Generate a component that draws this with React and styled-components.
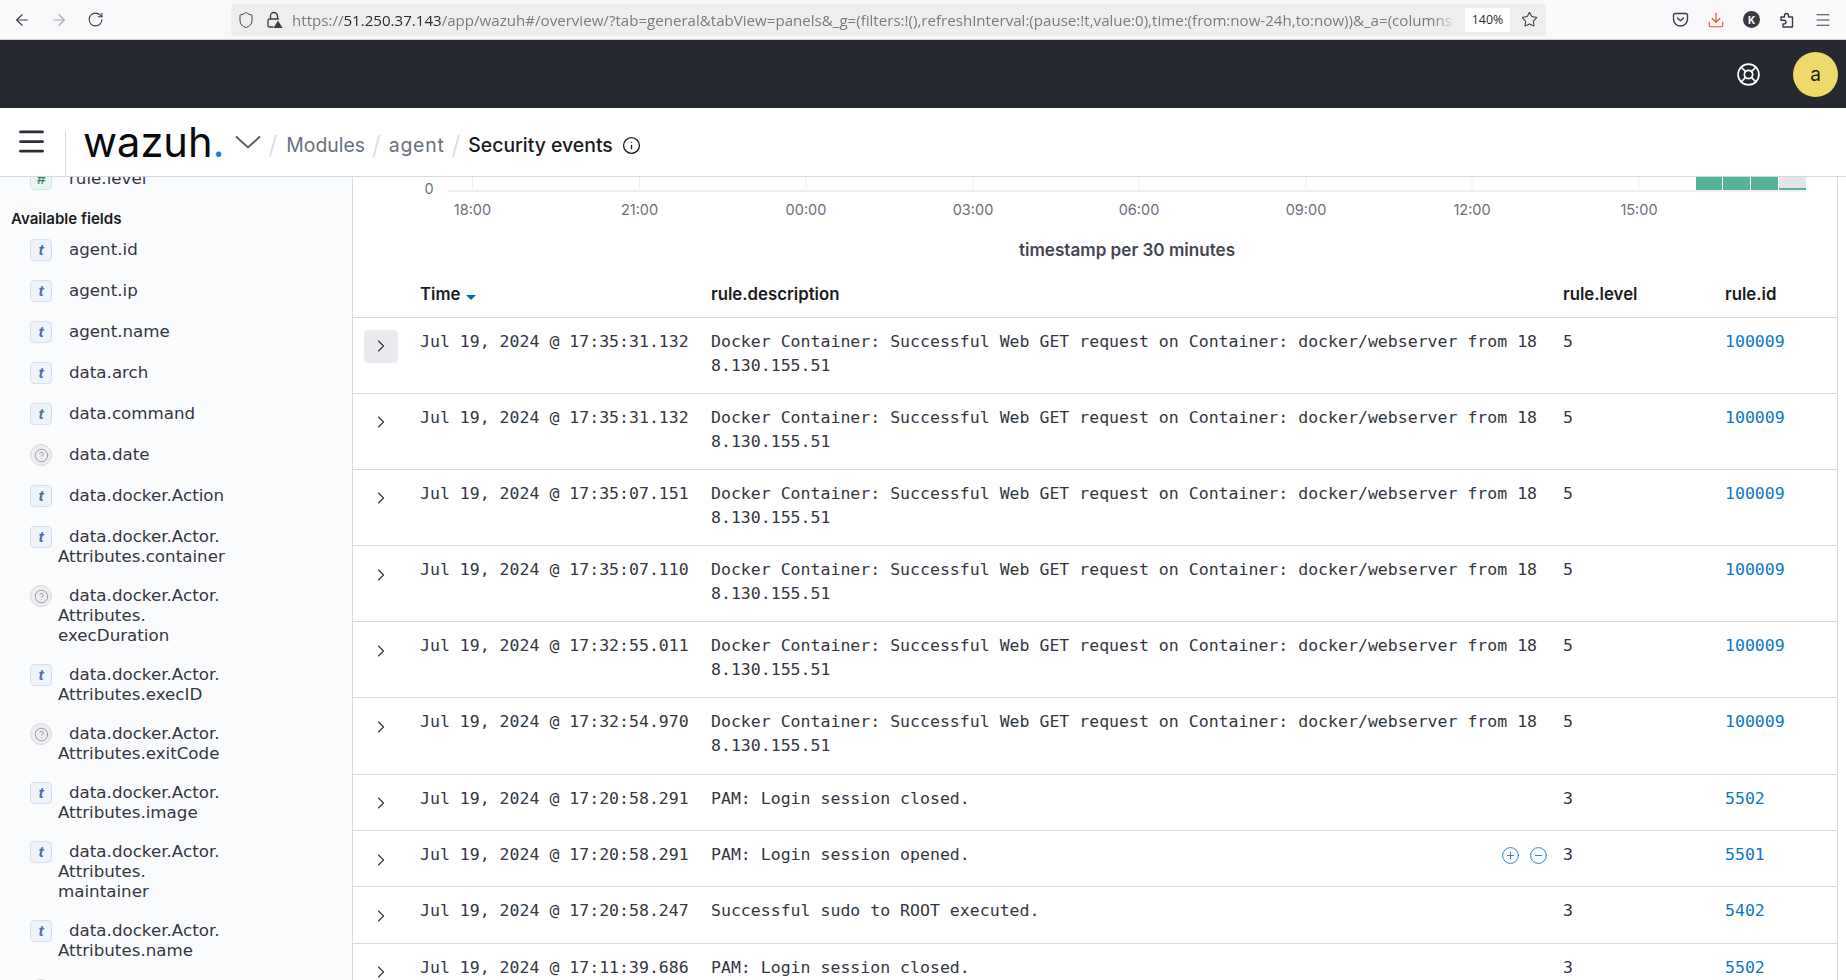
import styled, { createGlobalStyle } from "styled-components";
import {
  ArrowLeft,
  ArrowRight,
  ChevronRight,
  CircleHelp,
  CircleMinus,
  CirclePlus,
  Download,
  Info,
  LifeBuoy,
  Menu,
  RotateCw,
  Shield,
  Star,
} from "lucide-react";

const GlobalStyle = createGlobalStyle`
  html, body {
    margin: 0;
    height: 100%;
    overflow: hidden;
    background: #fff;
    font-family: Inter, "Liberation Sans", sans-serif;
    color: #1a1c21;
  }
`;

const URL_TEXT =
  "/app/wazuh#/overview/?tab=general&tabView=panels&_g=(filters:!(),refreshInterval:(pause:!t,value:0),time:(from:now-24h,to:now))&_a=(columns";

const FIELDS = [
  { type: "t", name: "agent.id" },
  { type: "t", name: "agent.ip" },
  { type: "t", name: "agent.name" },
  { type: "t", name: "data.arch" },
  { type: "t", name: "data.command" },
  { type: "?", name: "data.date" },
  { type: "t", name: "data.docker.Action" },
  { type: "t", name: "data.docker.Actor.\nAttributes.container" },
  { type: "?", name: "data.docker.Actor.\nAttributes.\nexecDuration" },
  { type: "t", name: "data.docker.Actor.\nAttributes.execID" },
  { type: "?", name: "data.docker.Actor.\nAttributes.exitCode" },
  { type: "t", name: "data.docker.Actor.\nAttributes.image" },
  { type: "t", name: "data.docker.Actor.\nAttributes.\nmaintainer" },
  { type: "t", name: "data.docker.Actor.\nAttributes.name" },
  { type: "?", name: "data.docker.Actor.\nAttributes.org" },
];

const DOCKER =
  "Docker Container: Successful Web GET request on Container: docker/webserver from 188.130.155.51";

const ROWS = [
  { time: "Jul 19, 2024 @ 17:35:31.132", text: DOCKER, level: 5, id: "100009", active: true },
  { time: "Jul 19, 2024 @ 17:35:31.132", text: DOCKER, level: 5, id: "100009" },
  { time: "Jul 19, 2024 @ 17:35:07.151", text: DOCKER, level: 5, id: "100009" },
  { time: "Jul 19, 2024 @ 17:35:07.110", text: DOCKER, level: 5, id: "100009" },
  { time: "Jul 19, 2024 @ 17:32:55.011", text: DOCKER, level: 5, id: "100009" },
  { time: "Jul 19, 2024 @ 17:32:54.970", text: DOCKER, level: 5, id: "100009" },
  { time: "Jul 19, 2024 @ 17:20:58.291", text: "PAM: Login session closed.", level: 3, id: "5502" },
  { time: "Jul 19, 2024 @ 17:20:58.291", text: "PAM: Login session opened.", level: 3, id: "5501", hover: true },
  { time: "Jul 19, 2024 @ 17:20:58.247", text: "Successful sudo to ROOT executed.", level: 3, id: "5402" },
  { time: "Jul 19, 2024 @ 17:11:39.686", text: "PAM: Login session closed.", level: 3, id: "5502" },
];

const TICKS = [
  ["18:00", 119.5],
  ["21:00", 286.5],
  ["00:00", 453],
  ["03:00", 620],
  ["06:00", 786],
  ["09:00", 953],
  ["12:00", 1119],
  ["15:00", 1286],
];

const Page = styled.div`
  height: 980px;
  display: flex;
  flex-direction: column;
  overflow: hidden;
`;

const BrowserBar = styled.div`
  height: 39px;
  flex: none;
  display: flex;
  align-items: center;
  padding: 0 13px;
  background: #f9f9fb;
  border-bottom: 1px solid #cfcfd8;
  color: #3c3c44;
`;

const NavIcons = styled.div`
  display: flex;
  align-items: center;
  gap: 19px;
  width: 218px;
  flex: none;
`;

const UrlBar = styled.div`
  width: 1315px;
  height: 32px;
  flex: none;
  display: flex;
  align-items: center;
  padding: 0 8px 0 6px;
  box-sizing: border-box;
  background: #eeeeef;
  border-radius: 4px;
  gap: 10px;
`;

const UrlText = styled.div`
  flex: 1;
  min-width: 0;
  margin-left: -1px;
  white-space: nowrap;
  overflow: hidden;
  font-family: "Open Sans", sans-serif;
  font-size: 15.1px;
  color: #7a7a82;
  mask-image: linear-gradient(to left, transparent 0, #000 24px);
  b {
    font-weight: 400;
    color: #2b2b33;
  }
`;

const ZoomPill = styled.span`
  width: 45px;
  flex: none;
  margin: 0 1px 0 -2px;
  text-align: center;
  background: #fff;
  border-radius: 3px;
  padding: 5px 0;
  font-family: "Open Sans", sans-serif;
  font-size: 12.4px;
  line-height: 14px;
  color: #2b2b33;
`;

const ToolIcons = styled.div`
  margin-left: 126px;
  display: flex;
  align-items: center;
  gap: 18px;
`;

const ProfileBadge = styled.span`
  width: 17px;
  height: 17px;
  border-radius: 50%;
  background: #3a3a40;
  color: #fff;
  font-size: 10px;
  font-weight: 700;
  display: flex;
  align-items: center;
  justify-content: center;
`;

const DarkHeader = styled.header`
  height: 68px;
  flex: none;
  background: #25282f;
  display: flex;
  align-items: center;
  justify-content: flex-end;
  padding-right: 8px;
  gap: 32px;
  color: #fff;
`;

const Avatar = styled.div`
  width: 45px;
  height: 45px;
  border-radius: 50%;
  background: #f0d96b;
  color: #1a1c21;
  font-size: 19px;
  display: flex;
  align-items: center;
  justify-content: center;
`;

const NavBar = styled.nav`
  height: 69px;
  flex: none;
  display: flex;
  align-items: center;
  box-sizing: border-box;
  border-bottom: 1px solid #d3dae6;
`;

const MenuButton = styled.div`
  width: 66px;
  height: 45px;
  flex: none;
  margin-top: 23px;
  padding-left: 15px;
  box-sizing: border-box;
  border-right: 1px solid #d3dae6;
  align-self: flex-start;
  color: #2b2e36;
  svg {
    display: block;
    margin-top: -6px;
  }
`;

const Logo = styled.div`
  margin-left: 17px;
  font-size: 41.6px;
  line-height: 42px;
  font-weight: 400;
  color: #0a0a0f;
  span {
    color: #1c7cf0;
  }
`;

const LogoCaret = styled.svg`
  margin-left: 10px;
  color: #5a5f6b;
`;

const Crumbs = styled.div`
  display: flex;
  align-items: center;
  margin: 6px 0 0 8px;
  font-size: 19.4px;
  color: #69707d;
`;

const Slash = styled.span`
  color: #d3dae6;
  margin: 0 ${(p) => (p.$first ? "9px" : "8px")} 0 ${(p) => (p.$first ? "0" : "7px")};
  font-size: 25px;
  line-height: 24px;
  font-weight: 300;
`;

const AgentCrumb = styled.span`
  letter-spacing: 0.8px;
`;

const CurrentCrumb = styled.span`
  color: #1a1c21;
  font-weight: 500;
  font-size: 19.4px;
`;

const Body = styled.div`
  flex: 1;
  min-height: 0;
  display: flex;
  overflow: hidden;
`;

const Sidebar = styled.aside`
  width: 353px;
  flex: none;
  box-sizing: border-box;
  background: #fafbfd;
  border-right: 1px solid #d3dae6;
  overflow: hidden;
`;

const FieldList = styled.div`
  margin-top: -9px;
`;

const SectionTitle = styled.h3`
  margin: 19px 0 10px 11px;
  font-size: 15.1px;
  line-height: 20px;
  font-weight: 600;
  color: #1a1c21;
`;

const FieldRow = styled.div`
  display: flex;
  gap: 6px;
  padding-left: 30px;
  margin-bottom: ${(p) => (p.$flush ? "0" : "19px")};
  min-height: 22px;
`;

const FieldBadge = styled.span`
  width: 22px;
  height: 22px;
  flex: none;
  box-sizing: border-box;
  display: flex;
  align-items: center;
  justify-content: center;
  border-radius: ${(p) => (p.$kind === "?" ? "50%" : "4px")};
  border: 1px solid
    ${(p) => (p.$kind === "?" ? "#d9d9db" : p.$kind === "#" ? "#d5e9e2" : "#d5e1ee")};
  background: ${(p) => (p.$kind === "?" ? "#eeeef0" : p.$kind === "#" ? "#e9f5f0" : "#eef4fa")};
  color: ${(p) => (p.$kind === "#" ? "#3f7f68" : "#49729b")};
  font-family: "Liberation Sans", sans-serif;
  font-size: 15.5px;
  font-style: italic;
  font-weight: 700;
`;

const FieldName = styled.div`
  width: 180px;
  text-indent: 11px;
  font-family: "DejaVu Sans", sans-serif;
  font-size: 16.7px;
  line-height: 20px;
  white-space: pre-line;
  color: #343741;
`;

const Main = styled.main`
  width: 1485px;
  flex: none;
  box-sizing: border-box;
  border-right: 1px solid #d3dae6;
  overflow: hidden;
`;

const ChartBox = styled.div`
  height: 84px;
  display: flex;
  flex-direction: column;
  svg {
    display: block;
  }
`;

const ChartCaption = styled.div`
  margin-top: 3px;
  padding-left: 64px;
  text-align: center;
  font-size: 17.1px;
  line-height: 20px;
  font-weight: 600;
  color: #434651;
`;

const Table = styled.table`
  width: 100%;
  table-layout: fixed;
  border-collapse: collapse;
`;

const HeadCell = styled.th`
  height: 56px;
  padding: 11px 8px 0;
  box-sizing: border-box;
  text-align: left;
  font-size: 16.8px;
  font-weight: 600;
  color: #1a1c21;
  border-bottom: 1px solid #d3dae6;
`;

const SortMark = styled.span`
  display: inline-block;
  width: 0;
  height: 0;
  margin-left: 5px;
  border: 5px solid transparent;
  border-top: 5px solid #006bb4;
  border-bottom: 0;
`;

const BodyRow = styled.tr`
  border-bottom: 1px solid #d3dae6;
`;

const Cell = styled.td`
  padding: 12px 12px 15.2px 8px;
  vertical-align: top;
  font-family: "DejaVu Sans Mono", monospace;
  font-size: 16.55px;
  line-height: 24px;
  color: #343741;
  word-break: break-all;
`;

const ExpandCell = styled.td`
  padding: 12px 0 10.4px 11px;
  vertical-align: top;
`;

const ExpandButton = styled.div`
  width: 34px;
  height: 33px;
  display: flex;
  align-items: center;
  justify-content: center;
  border-radius: 4px;
  background: ${(p) => (p.$active ? "#e9ebee" : "transparent")};
  color: #343741;
`;

const DescWrap = styled.div`
  display: flex;
  justify-content: space-between;
`;

const CellActions = styled.span`
  display: flex;
  align-items: center;
  gap: 9px;
  margin-right: -5px;
  color: #1b7fc9;
`;

const RuleLink = styled.a`
  color: #0f77c4;
`;

function Chart() {
  return (
    <svg width="1484" height="60" viewBox="0 0 1484 60">
      <g stroke="#eef0f3" strokeWidth="1">
        {TICKS.map(([label, x]) => (
          <line key={label} x1={x} x2={x} y1="0" y2="12" />
        ))}
      </g>
      <rect x="1343" y="0" width="26" height="13" fill="#54b399" />
      <rect x="1370" y="0" width="27" height="13" fill="#54b399" />
      <rect x="1398" y="0" width="27" height="13" fill="#54b399" />
      <rect x="1426" y="0" width="27" height="11" fill="#e2e4e8" />
      <rect x="1426" y="11" width="27" height="2" fill="#54b399" />
      <rect x="94" y="13" width="1359" height="2" fill="#eef0f3" />
      <text x="76" y="17" fontSize="14.5" fill="#69707d" textAnchor="middle">0</text>
      {TICKS.map(([label, x]) => (
        <text key={label} x={x} y="38" fontSize="14.5" fill="#69707d" textAnchor="middle">
          {label}
        </text>
      ))}
    </svg>
  );
}

function WarnLock() {
  return (
    <svg width="18" height="18" viewBox="0 0 18 18" fill="none" stroke="currentColor" strokeWidth="1.3">
      <path d="M5.5 8V5a3.5 3.5 0 0 1 7 0v3" />
      <path d="M8 16H4.5A1.5 1.5 0 0 1 3 14.500V9.500A1.500 1.500 0 0 1 4.500 8h9" strokeLinecap="round" />
      <path d="M13 9.500l4.500 7.500h-9z" fill="currentColor" stroke="none" />
    </svg>
  );
}

function PocketIcon() {
  return (
    <svg width="17" height="17" viewBox="0 0 17 17" fill="none" stroke="currentColor" strokeWidth="1.4">
      <path d="M3 2.500h11A1.500 1.500 0 0 1 15.500 4v4a7 7 0 0 1-14 0V4A1.500 1.500 0 0 1 3 2.500z" />
      <path d="M5.500 7l3 2.800 3-2.800" strokeLinecap="round" strokeLinejoin="round" />
    </svg>
  );
}

function ExtensionIcon() {
  return (
    <svg width="18" height="18" viewBox="0 0 18 18" fill="none" stroke="currentColor" strokeWidth="1.4" strokeLinejoin="round">
      <path d="M3 6h3.500V4.500a2 2 0 0 1 4 0V6h4v10H5v-3h1a1.900 1.900 0 0 0 0-3.800H3z" />
    </svg>
  );
}

export default function App() {
  return (
    <Page>
      <GlobalStyle />
      <BrowserBar>
        <NavIcons>
          <ArrowLeft size={18} strokeWidth={1.5} />
          <ArrowRight size={18} strokeWidth={1.5} color="#a9a9b0" />
          <RotateCw size={17} strokeWidth={1.5} />
        </NavIcons>
        <UrlBar>
          <Shield size={18} strokeWidth={1.3} />
          <WarnLock />
          <UrlText>
            https://<b>51.250.37.143</b>
            {URL_TEXT}
          </UrlText>
          <ZoomPill>140%</ZoomPill>
          <Star size={17} strokeWidth={1.5} />
        </UrlBar>
        <ToolIcons>
          <PocketIcon />
          <Download size={18} strokeWidth={1.6} color="#e8532b" />
          <ProfileBadge>K</ProfileBadge>
          <ExtensionIcon />
          <Menu size={18} strokeWidth={1.5} />
        </ToolIcons>
      </BrowserBar>

      <DarkHeader>
        <LifeBuoy size={25} strokeWidth={1.6} />
        <Avatar>a</Avatar>
      </DarkHeader>

      <NavBar>
        <MenuButton>
          <Menu size={33} strokeWidth={2} />
        </MenuButton>
        <Logo>
          wazuh<span>.</span>
        </Logo>
        <LogoCaret width="26" height="14" viewBox="0 0 26 14" fill="none" stroke="currentColor" strokeWidth="2">
          <path d="M1 1.500l12 11 12-11" />
        </LogoCaret>
        <Crumbs>
          <Slash $first>/</Slash>
          Modules
          <Slash>/</Slash>
          <AgentCrumb>agent</AgentCrumb>
          <Slash>/</Slash>
          <CurrentCrumb>Security events</CurrentCrumb>
          <Info size={19} strokeWidth={1.7} color="#1a1c21" style={{ marginLeft: 9 }} />
        </Crumbs>
      </NavBar>

      <Body>
        <Sidebar>
          <FieldList>
            <FieldRow $flush>
              <FieldBadge $kind="#">#</FieldBadge>
              <FieldName>rule.level</FieldName>
            </FieldRow>
            <SectionTitle>Available fields</SectionTitle>
            {FIELDS.map((f) => (
              <FieldRow key={f.name}>
                <FieldBadge $kind={f.type}>
                  {f.type === "?" ? <CircleHelp size={15} strokeWidth={1.3} color="#8a8d94" /> : "t"}
                </FieldBadge>
                <FieldName>{f.name}</FieldName>
              </FieldRow>
            ))}
          </FieldList>
        </Sidebar>

        <Main>
          <ChartBox>
            <Chart />
            <ChartCaption>timestamp per 30 minutes</ChartCaption>
          </ChartBox>
          <Table>
            <colgroup>
              <col style={{ width: 59 }} />
              <col style={{ width: 291 }} />
              <col style={{ width: 852 }} />
              <col style={{ width: 162 }} />
              <col />
            </colgroup>
            <thead>
              <tr>
                <HeadCell />
                <HeadCell>
                  Time
                  <SortMark />
                </HeadCell>
                <HeadCell>rule.description</HeadCell>
                <HeadCell>rule.level</HeadCell>
                <HeadCell>rule.id</HeadCell>
              </tr>
            </thead>
            <tbody>
              {ROWS.map((r, i) => (
                <BodyRow key={i}>
                  <ExpandCell>
                    <ExpandButton $active={r.active}>
                      <ChevronRight size={20} strokeWidth={1.4} />
                    </ExpandButton>
                  </ExpandCell>
                  <Cell>{r.time}</Cell>
                  <Cell>
                    <DescWrap>
                      <span>{r.text}</span>
                      {r.hover && (
                        <CellActions>
                          <CirclePlus size={19} strokeWidth={1.2} />
                          <CircleMinus size={19} strokeWidth={1.2} />
                        </CellActions>
                      )}
                    </DescWrap>
                  </Cell>
                  <Cell>{r.level}</Cell>
                  <Cell>
                    <RuleLink>{r.id}</RuleLink>
                  </Cell>
                </BodyRow>
              ))}
            </tbody>
          </Table>
        </Main>
      </Body>
    </Page>
  );
}
